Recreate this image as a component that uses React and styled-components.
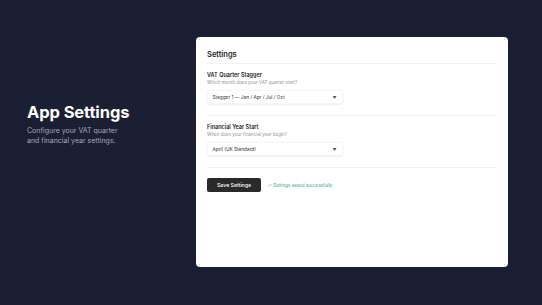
import React from 'react'
import styled, { createGlobalStyle } from 'styled-components'

// Laid out at 2x and scaled down so small text isn't clamped by the browser minimum
const GlobalStyle = createGlobalStyle`
  html, body {
    margin: 0;
    padding: 0;
    background: #1a1f33;
    overflow: hidden;
  }
  body {
    font-family: Inter, "Noto Sans", sans-serif;
  }
`

const Section = ({ label, hint, value }) => {
    return (
        <Group>
            <Label>{label}</Label>
            <Hint>{hint}</Hint>
            <Select>
                <span>{value}</span>
                <Caret>▼</Caret>
            </Select>
        </Group>
    )
}

const App = () => {
    return (
        <>
            <GlobalStyle />
            <Viewport>
                <Page>
                    <Intro>
                        <h1>App Settings</h1>
                        <p>Configure your VAT quarter<br />and financial year settings.</p>
                    </Intro>
                    <Card>
                        <CardHeader>Settings</CardHeader>
                        <Section
                            label="VAT Quarter Stagger"
                            hint="Which month does your VAT quarter start?"
                            value="Stagger 1 — Jan / Apr / Jul / Oct"
                        />
                        <Section
                            label="Financial Year Start"
                            hint="When does your financial year begin?"
                            value="April (UK Standard)"
                        />
                        <Footer>
                            <SaveButton>Save Settings</SaveButton>
                            <Status>✓ Settings saved successfully</Status>
                        </Footer>
                    </Card>
                </Page>
            </Viewport>
        </>
    )
}

let Viewport = styled.div`
width: 542px;
height: 305px;
overflow: hidden;
`

let Page = styled.div`
width: 1084px;
height: 610px;
transform: scale(0.5);
transform-origin: 0 0;
box-sizing: border-box;
padding: 74px 68px 76px 54px;
display: flex;
align-items: flex-start;
`

let Intro = styled.div`
width: 338px;
padding-top: 129px;
color: white;
h1 {
    margin: 0;
    font-size: 33px;
    line-height: 42px;
    font-weight: 700;
    letter-spacing: -0.2px;
}
p {
    margin: 6px 0 0;
    font-size: 14px;
    line-height: 20px;
    color: #a3a9ba;
}
`

let Card = styled.div`
width: 624px;
height: 460px;
box-sizing: border-box;
background: white;
border-radius: 8px;
padding: 0 22px;
display: flex;
flex-direction: column;
`

let CardHeader = styled.div`
padding: 23px 0 7px;
font-size: 15px;
line-height: 22px;
font-weight: 600;
color: #1c1c1c;
border-bottom: 2px solid #f1f2f4;
`

let Group = styled.div`
padding: 13px 0 22px;
border-bottom: 2px solid #f1f2f4;
`

let Label = styled.div`
font-size: 11px;
line-height: 16px;
font-weight: 600;
color: #1c1c1c;
`

let Hint = styled.div`
font-size: 9px;
line-height: 16px;
color: #8b8f98;
margin-bottom: 7px;
`

let Select = styled.div`
width: 272px;
height: 28px;
box-sizing: border-box;
border: 1.5px solid #e6e7ea;
border-radius: 4px;
box-shadow: 0 1px 2px rgba(0,0,0,0.05);
padding: 0 12px 0 10px;
display: flex;
align-items: center;
justify-content: space-between;
font-size: 9.5px;
color: #333;
`

let Caret = styled.span`
font-size: 8px;
color: #555;
`

let Footer = styled.div`
padding-top: 20px;
display: flex;
align-items: center;
gap: 14px;
`

let SaveButton = styled.div`
width: 108px;
height: 28px;
background: #2a2a2a;
color: white;
border-radius: 4px;
display: flex;
justify-content: center;
align-items: center;
font-size: 10.5px;
font-weight: 500;
`

let Status = styled.div`
font-size: 9px;
color: #3aa676;
`

export default App
